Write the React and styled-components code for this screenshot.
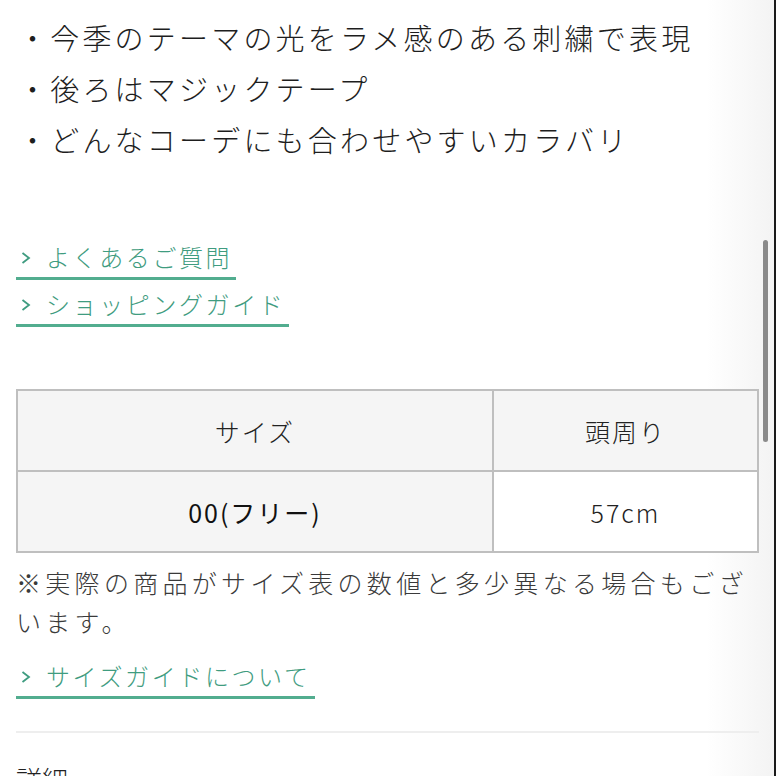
import styled, { createGlobalStyle } from "styled-components";

const GlobalStyle = createGlobalStyle`
    html, body {
        margin: 0;
        padding: 0;
        background: #fff;
    }
    body {
        font-family: "Noto Sans CJK JP", "Noto Sans", sans-serif;
        font-weight: 300;
        color: #222;
        overflow: hidden;
    }
`;

const features = [
    "今季のテーマの光をラメ感のある刺繍で表現",
    "後ろはマジックテープ",
    "どんなコーデにも合わせやすいカラバリ",
];

const Chevron = () => (
    <svg width="12" height="14" viewBox="0 0 12 14" fill="none">
        <polyline points="2.5,2 9,7 2.5,12" stroke="currentColor" strokeWidth="1.8" />
    </svg>
);

const App = () => {
    return (
        <Page>
            <GlobalStyle />
            <Features>
                {features.map((f) => (
                    <li key={f}>・{f}</li>
                ))}
            </Features>

            <Links>
                <GuideLink href="#"><Chevron />よくあるご質問</GuideLink>
                <GuideLink href="#"><Chevron />ショッピングガイド</GuideLink>
            </Links>

            <SizeTable>
                <tbody>
                    <tr>
                        <Cell as="th" shaded>サイズ</Cell>
                        <Cell as="th" shaded>頭周り</Cell>
                    </tr>
                    <tr>
                        <Cell as="th" shaded strong>00(フリー)</Cell>
                        <Cell>57cm</Cell>
                    </tr>
                </tbody>
            </SizeTable>

            <Note>※実際の商品がサイズ表の数値と多少異なる場合もございます。</Note>

            <SizeGuide>
                <GuideLink href="#"><Chevron />サイズガイドについて</GuideLink>
            </SizeGuide>

            <Divider />

            <SectionTitle>詳細</SectionTitle>

            <Scrollbar />
            <Edge />
        </Page>
    );
};

const Page = styled.div`
    position: relative;
    height: 776px;
    padding: 12px 17px 0 16px;
    box-sizing: border-box;
    overflow: hidden;
    background: linear-gradient(to left, #f3f3f3 0px, #fff 70px);
`;

const Features = styled.ul`
    list-style: none;
    margin: 0 0 0 2px;
    padding: 0;

    li {
        font-size: 29px;
        line-height: 51px;
        letter-spacing: 3.2px;
        color: #1e1e1e;
        white-space: nowrap;
    }
`;

const Links = styled.div`
    margin-top: 76px;
    display: flex;
    flex-direction: column;
    align-items: flex-start;
    gap: 8px;
`;

const GuideLink = styled.a`
    display: inline-flex;
    align-items: center;
    gap: 14px;
    padding: 0 4px 4px 4px;
    font-size: 24px;
    line-height: 32px;
    letter-spacing: 2.6px;
    color: #3f9c80;
    text-decoration: none;
    border-bottom: 3px solid #52ad8f;

    svg {
        flex: none;
        margin-top: 2px;
    }
`;

const SizeTable = styled.table`
    margin-top: 62px;
    width: 743px;
    border-collapse: collapse;
    table-layout: fixed;
`;

const Cell = styled.td`
    height: 77px;
    border: 2px solid #bfbfbf;
    text-align: center;
    vertical-align: middle;
    font-size: 25px;
    font-weight: ${({ strong }) => (strong ? 400 : 300)};
    letter-spacing: 2px;
    color: ${({ strong }) => (strong ? "#111" : "#222")};
    background: ${({ shaded }) => (shaded ? "#f5f5f5" : "#fff")};

    &:first-child {
        width: 472px;
    }
`;

const Note = styled.p`
    margin: 10px 0 0;
    font-size: 25px;
    line-height: 39px;
    letter-spacing: 4.3px;
    color: #3a3a3a;
`;

const SizeGuide = styled.div`
    margin-top: 19px;
`;

const Divider = styled.hr`
    margin: 32px 0 0;
    border: none;
    height: 2px;
    background: #eeeeee;
`;

const SectionTitle = styled.h2`
    margin: 28px 0 0;
    font-size: 26px;
    font-weight: 300;
    line-height: 36px;
    color: #222;
`;

const Scrollbar = styled.div`
    position: absolute;
    top: 240px;
    left: 763px;
    width: 5px;
    height: 202px;
    border-radius: 3px;
    background: #8a8a8a;
`;

const Edge = styled.div`
    position: absolute;
    top: 0;
    right: 0;
    width: 2px;
    height: 100%;
    background: #1a1a1a;
`;

export default App;
